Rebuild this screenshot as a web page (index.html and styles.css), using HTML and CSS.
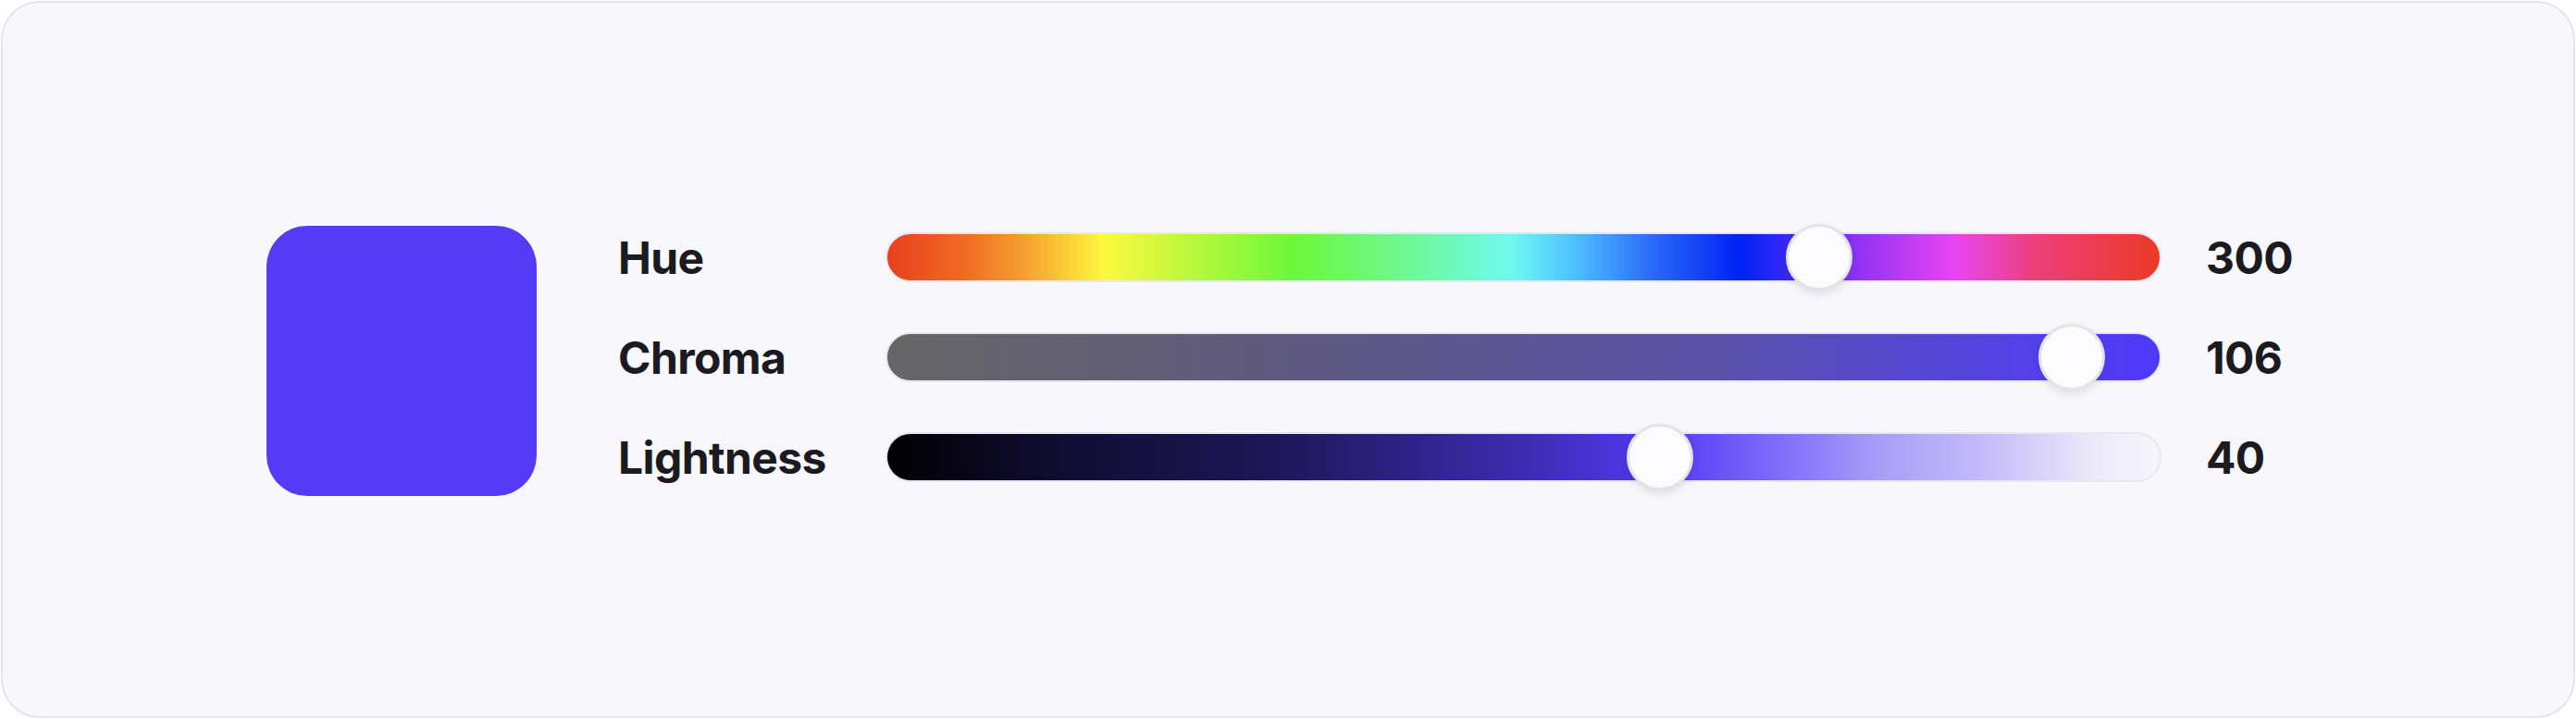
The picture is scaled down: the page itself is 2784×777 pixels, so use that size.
FILE: index.html
```html
<!DOCTYPE html>
<html lang="en">
<head>
    <meta charset="UTF-8">
    <meta name="viewport" content="width=device-width, initial-scale=1.0">
    <title>OKLCH Picker</title>
    <link rel="stylesheet" href="styles.css">
</head>
<body>

    <!-- Color picker card -->
    <div class="card">
        <div class="swatch"></div>

        <div class="controls">
            <div class="row">
                <span class="label">Hue</span>
                <div class="track hue">
                    <span class="thumb" style="left: 971px;"></span>
                </div>
                <span class="value">300</span>
            </div>
            <div class="row">
                <span class="label">Chroma</span>
                <div class="track chroma">
                    <span class="thumb" style="left: 1244px;"></span>
                </div>
                <span class="value">106</span>
            </div>
            <div class="row">
                <span class="label">Lightness</span>
                <div class="track lightness">
                    <span class="thumb" style="left: 799px;"></span>
                </div>
                <span class="value">40</span>
            </div>
        </div>
    </div>

</body>
</html>
```

FILE: styles.css
```css
/* General Reset */
body {
    margin: 0;
    font-family: Inter, "Liberation Sans", sans-serif;
    background-color: #ffffff;
    color: #1b1a21;
}
.card {
    box-sizing: border-box;
    width: calc(100vw - 2px);
    height: 775px;
    margin: 1px;
    padding: 237px 0 0 285px;
    display: flex;
    align-items: flex-start;
    background-color: #f8f8fc;
    border: 2px solid #e4e4ea;
    border-radius: 42px;
}
.swatch {
    width: 292px;
    height: 292px;
    margin-top: 4px;
    flex-shrink: 0;
    background-color: #553bf7;
    border-radius: 44px;
}
.controls {
    display: flex;
    flex-direction: column;
    gap: 32px;
    margin-left: 89px;
}
.row {
    display: flex;
    align-items: center;
    height: 76px;
}
.label {
    width: 289px;
    margin-left: -1px;
    font-size: 48px;
    font-weight: 700;
    letter-spacing: -0.6px;
}
.value {
    margin-left: 48px;
    font-size: 48px;
    font-weight: 700;
    letter-spacing: -0.6px;
}
.track {
    position: relative;
    box-sizing: border-box;
    width: 1379px;
    height: 54px;
    border: 2px solid #e8e6f0;
    border-radius: 27px;
}
.track.hue {
    background: linear-gradient(90deg,
        #e8401e 0%, #f06a22 6%, #f5a32e 11%, #fdf83f 17%, #b8f83c 24%,
        #6cf83b 32%, #6ff8a0 42%, #6ffaf0 49%, #4fc0ff 54%, #2a6cf8 60%,
        #0022f5 67%, #5a2cf6 73%, #9a35f5 77%, #e845f0 84%, #ec3f7c 90%, #eb3a25 100%);
}
.track.chroma {
    background: linear-gradient(90deg, #666666 0%, #5f5a7e 30%, #5b52a8 65%, #5140f0 92%, #5038fa 100%);
}
.track.lightness {
    background: linear-gradient(90deg,
        #000000 0%, #0f0b2e 12%, #1e1656 30%, #3e2bb0 50%, #5539f6 61%,
        #8a78fb 72%, #a89ef6 78%, #c4bafa 86%, #eceaf9 95%, #f6f5fc 100%);
}
.thumb {
    position: absolute;
    top: -11px;
    box-sizing: border-box;
    width: 72px;
    height: 72px;
    background-color: #fcfcfe;
    border: 3px solid #e3e3ea;
    border-radius: 50%;
    box-shadow: 0 4px 10px rgba(30, 30, 60, 0.12);
}
```
